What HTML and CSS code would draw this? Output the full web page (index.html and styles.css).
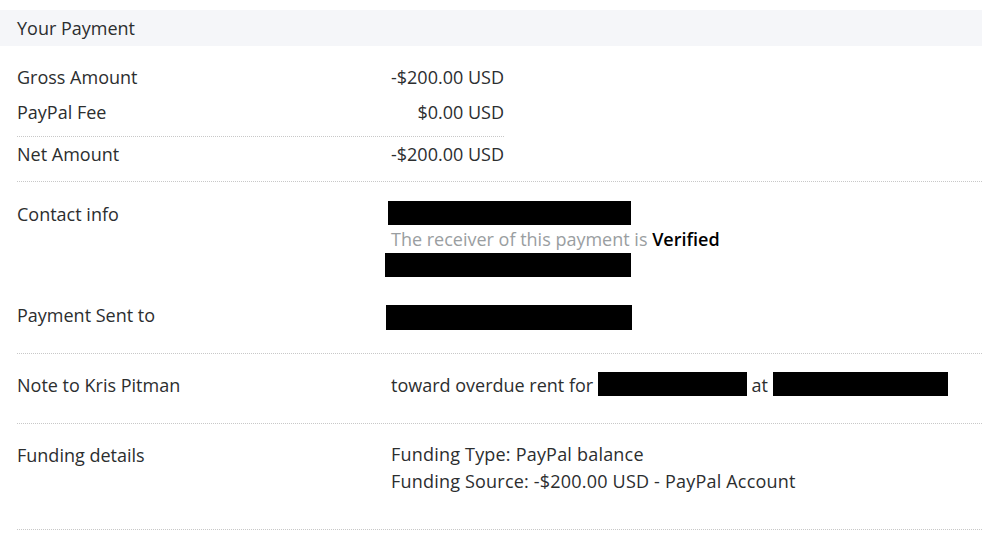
FILE: index.html
```html
<!DOCTYPE html>
<html lang="en">
<head>
    <meta charset="UTF-8">
    <title>Your Payment</title>
    <link rel="stylesheet" href="styles.css">
</head>
<body>

<div class="payment">
    <div class="head">Your Payment</div>

    <div class="amounts">
        <div class="amount-row"><span>Gross Amount</span><span>-$200.00 USD</span></div>
        <div class="amount-row"><span>PayPal Fee</span><span>$0.00 USD</span></div>
        <div class="amount-row net"><span>Net Amount</span><span>-$200.00 USD</span></div>
    </div>

    <div class="section contact">
        <div class="row">
            <div class="label">Contact info</div>
            <div class="value">
                <div class="redact r1"></div>
                <div class="muted">The receiver of this payment is <b>Verified</b></div>
                <div class="redact r2"></div>
            </div>
        </div>
        <div class="row sent">
            <div class="label">Payment Sent to</div>
            <div class="value">
                <div class="redact r3"></div>
            </div>
        </div>
    </div>

    <div class="section">
        <div class="row">
            <div class="label">Note to Kris Pitman</div>
            <div class="value note">
                toward overdue rent for <span class="redact inline w1"></span> at <span class="redact inline w2"></span>
            </div>
        </div>
    </div>

    <div class="section funding">
        <div class="row">
            <div class="label">Funding details</div>
            <div class="value">
                <div>Funding Type: PayPal balance</div>
                <div>Funding Source: -$200.00 USD - PayPal Account</div>
            </div>
        </div>
    </div>
</div>

</body>
</html>
```

FILE: styles.css
```css
body {
    margin: 0;
    background: #fff;
    font-family: "Open Sans", Arial, sans-serif;
    font-size: 18px;
    color: #2c2e2f;
}
.payment {
    padding-top: 10px;
}
.head {
    background-color: #f5f6f9;
    height: 36px;
    line-height: 36px;
    padding-left: 17px;
}
.amounts {
    width: 487px;
    margin: 14px 0 0 17px;
}
.amount-row {
    display: flex;
    justify-content: space-between;
    height: 35px;
    line-height: 35px;
}
.amount-row.net {
    border-top: 1px dotted #c8c8c8;
    margin-top: 6px;
    margin-bottom: 9px;
}
.section {
    margin-left: 17px;
    border-top: 1px dotted #c8c8c8;
    padding: 19px 0 26px;
}
.section.contact {
    padding: 20px 0 23px;
}
.funding {
    padding-bottom: 34px;
    border-bottom: 1px dotted #c8c8c8;
}
.row {
    display: grid;
    grid-template-columns: 374px 1fr;
}
.row.sent {
    margin-top: 26px;
}
.label {
    line-height: 24px;
}
.value {
    line-height: 27px;
    margin-top: -2px;
}
.funding .value {
    letter-spacing: 0.2px;
}
.contact .value {
    margin-top: -1px;
}
.value.note {
    line-height: 24px;
    height: 24px;
    margin-top: 0;
}
.muted {
    color: #9a9ea1;
    line-height: 27px;
    margin-top: 1px;
}
.muted b {
    color: #000;
    font-weight: 600;
}
.redact {
    background: #000;
    height: 24px;
}
.r1 {
    width: 243px;
    margin-left: -3px;
}
.r2 {
    width: 246px;
    margin-left: -6px;
}
.r3 {
    width: 246px;
    margin-left: -5px;
    margin-top: 3px;
    height: 25px;
}
.redact.inline {
    display: inline-block;
    vertical-align: -4px;
    margin-top: -8px;
}
.w1 {
    width: 149px;
}
.w2 {
    width: 175px;
    vertical-align: -6px;
}
```
